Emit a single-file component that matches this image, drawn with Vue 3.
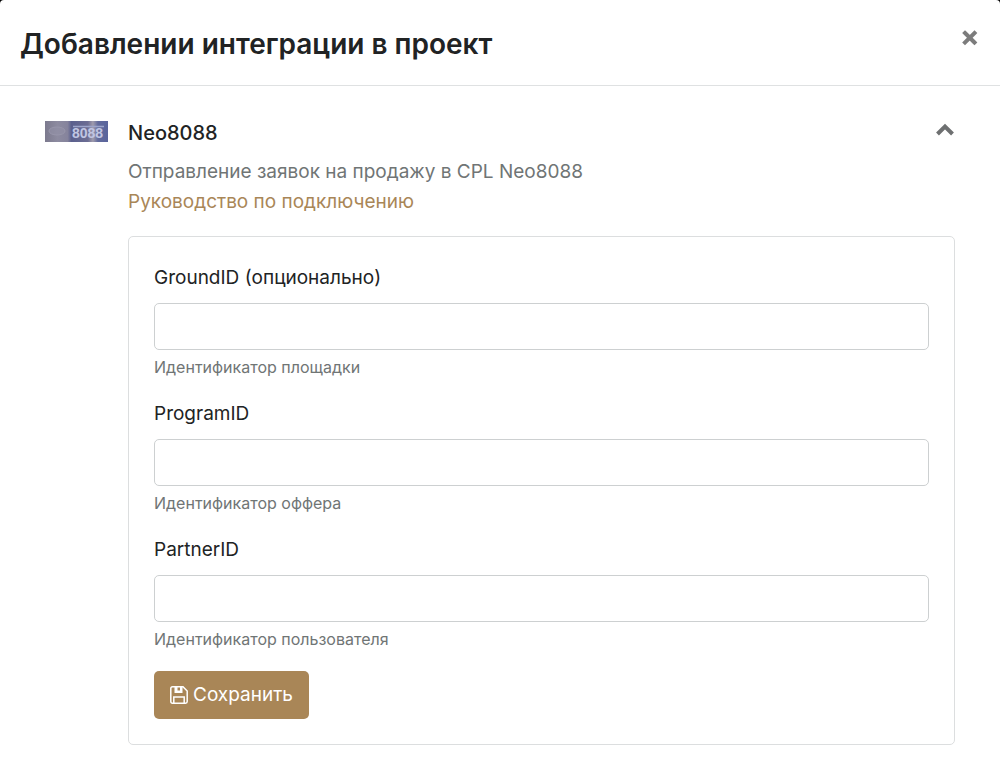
<script setup>
import { ref } from 'vue'

const fields = ref([
  { id: 'ground', label: 'GroundID (опционально)', help: 'Идентификатор площадки', value: '' },
  { id: 'program', label: 'ProgramID', help: 'Идентификатор оффера', value: '' },
  { id: 'partner', label: 'PartnerID', help: 'Идентификатор пользователя', value: '' },
])
const open = ref(true)
</script>

<template>
  <main class="modal">
    <header class="modal-header">
      <h1>Добавлении интеграции в проект</h1>
      <button class="icon-button" type="button" aria-label="Закрыть">
        <svg width="16" height="16" viewBox="0 0 16 16"><path d="M3 3 12.500 12.500M12.500 3 3 12.500" fill="none" stroke="#7c7c7c" stroke-width="4" stroke-linecap="square" /></svg>
      </button>
    </header>
    <section class="integration">
      <svg class="logo" width="63" height="21" viewBox="0 0 63 21" aria-hidden="true">
        <defs>
          <linearGradient id="logo-fill">
            <stop offset="0" stop-color="#7c7a8e" />
            <stop offset=".2" stop-color="#8d8ba0" />
            <stop offset=".36" stop-color="#85839c" />
            <stop offset=".42" stop-color="#5b608e" />
            <stop offset=".68" stop-color="#6c6d93" />
            <stop offset=".76" stop-color="#a09cad" />
            <stop offset=".84" stop-color="#626b9c" />
            <stop offset="1" stop-color="#59649c" />
          </linearGradient>
        </defs>
        <rect width="63" height="21" fill="url(#logo-fill)" />
        <ellipse cx="12" cy="10" rx="8" ry="4" fill="#9391a6" fill-opacity=".6" stroke="#9896ab" />
        <path d="M28 5.500H59" stroke="#9da5cb" stroke-width="1.5" />
        <text x="27" y="17" class="logo-text">8088</text>
      </svg>
      <div class="content">
        <div class="title-row">
          <h2>Neo8088</h2>
          <button class="icon-button" type="button" aria-label="Свернуть" :aria-expanded="open" @click="open = !open">
            <svg width="20" height="14" viewBox="0 0 20 14"><path d="M2.500 11 10 3.500 17.500 11" fill="none" stroke="#6e7071" stroke-width="4" /></svg>
          </button>
        </div>
        <p class="description">Отправление заявок на продажу в CPL Neo8088</p>
        <a class="guide" href="#">Руководство по подключению</a>
        <form v-if="open" class="card" @submit.prevent>
          <div v-for="field in fields" :key="field.id" class="field">
            <label :for="field.id">{{ field.label }}</label>
            <input :id="field.id" v-model="field.value" type="text" :aria-describedby="field.id + '-help'" />
            <small :id="field.id + '-help'">{{ field.help }}</small>
          </div>
          <button class="save" type="submit">
            <svg width="18" height="18" viewBox="0 0 18 18" fill="none" stroke="#fff" stroke-width="1.5" aria-hidden="true"><path d="M.8 2.500Q.8.800 2.500.800H13L17.200 5V15.500Q17.200 17.200 15.500 17.200H2.500Q.8 17.200.8 15.500ZM3.800 17.200V11H14.200V17.200" /><path d="M4.500 1H7.500V4.500H10V1H12.500V7H4.500Z" fill="#fff" stroke="none" /></svg>
            Сохранить
          </button>
        </form>
      </div>
    </section>
  </main>
</template>

<style>
body { margin: 0; background: #000; }
</style>

<style scoped>
* { box-sizing: border-box; }
.modal { min-height: 100vh; border-radius: 4px 4px 0 0; background: #fff; font-family: Inter, "Liberation Sans", sans-serif; font-size: 19px; line-height: 30px; color: #212324; }
.modal-header { display: flex; justify-content: space-between; align-items: flex-start; padding: 24px 20px 20px; border-bottom: 1px solid #dfe1e2; }
h1, h2, p { margin: 0; }
h1 { font-size: 28px; line-height: 41px; font-weight: 600; }
.icon-button { display: flex; padding: 0; border: 0; background: none; cursor: pointer; }
.modal-header .icon-button { margin: 6px 2px 0; }
.integration { display: flex; gap: 20px; padding: 32px 45px 14px; }
.logo { flex: none; margin-top: 3px; }
.logo-text { font: bold 14px "Liberation Sans", sans-serif; fill: #c0c5e2; }
.content { flex: 1; min-width: 0; }
.title-row { display: flex; justify-content: space-between; align-items: flex-start; margin-bottom: 9px; }
.title-row .icon-button { margin-top: 5px; }
h2 { font-size: 20px; line-height: 30px; font-weight: 500; }
.description { color: #707575; }
.guide { display: block; color: #a98657; text-decoration: none; }
.card { margin-top: 19px; padding: 26px 25px 25px; border: 1px solid #dcdedf; border-radius: 5px; }
.field { display: flex; flex-direction: column; margin-bottom: 20px; }
.field label { margin-bottom: 10px; }
.field input { width: 100%; height: 47px; padding: 8px 15px; border: 1px solid #cdd0d1; border-radius: 5px; font: inherit; color: inherit; background: #fff; }
.field small { margin-top: 5px; font-size: 16px; line-height: 24px; color: #707575; }
.save { display: flex; align-items: center; gap: 5px; height: 48px; padding: 0 16px; border: 0; border-radius: 5px; background: #a98657; color: #fff; font: inherit; cursor: pointer; }
</style>
